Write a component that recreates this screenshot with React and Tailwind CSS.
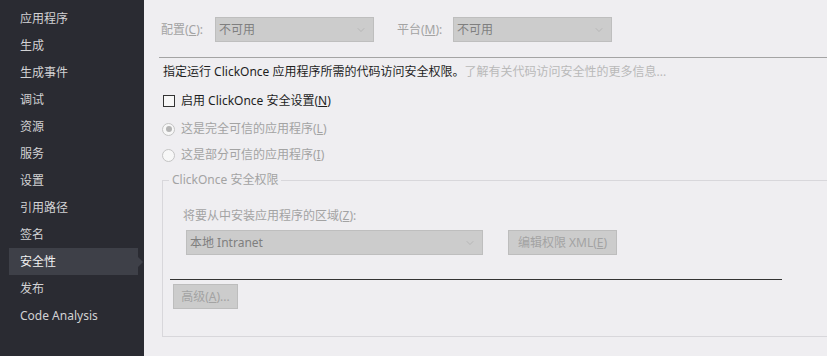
import { ChevronDown } from "lucide-react";

const navItems = [
  "应用程序",
  "生成",
  "生成事件",
  "调试",
  "资源",
  "服务",
  "设置",
  "引用路径",
  "签名",
  "安全性",
  "发布",
  "Code Analysis",
];

const font = { fontFamily: '"Noto Sans", "Noto Sans CJK SC", sans-serif' };

function Select({ value, width }) {
  return (
    <div
      className="flex items-center justify-between h-[25px] bg-[#cccccc] border border-[#bebebe] pl-[3px] pr-[6px]"
      style={{ width }}
    >
      <span className="text-[12px] text-[#7f7f7f]">{value}</span>
      <ChevronDown size={12} strokeWidth={1.2} className="text-[#a8a8a8]" />
    </div>
  );
}

function Button({ children, className = "" }) {
  return (
    <div
      className={`flex items-center justify-center h-[25px] bg-[#cccccc] border border-[#bdbdbd] text-[12px] text-[#a3a3a3] ${className}`}
    >
      {children}
    </div>
  );
}

export default function App() {
  return (
    <div className="flex w-[827px] h-[356px] overflow-hidden" style={font}>
      {/* Sidebar */}
      <div className="w-[144px] h-full bg-[#2a2b32] pt-[5px] shrink-0">
        {navItems.map((item) => {
          const active = item === "安全性";
          return (
            <div key={item} className="relative h-[27px] flex items-center">
              <div
                className={`ml-[9px] w-[129px] h-full flex items-center pl-[11px] text-[12px] ${
                  active ? "bg-[#3e4048] text-[#f2f2f2]" : "text-[#d2d2d4]"
                }`}
              >
                {item}
              </div>
              {active && (
                <div className="absolute left-[138px] top-[9px] w-0 h-0 border-y-[5px] border-y-transparent border-l-[5px] border-l-[#3e4048]" />
              )}
            </div>
          );
        })}
      </div>

      {/* Main */}
      <div className="flex-1 h-full bg-[#efeef1] text-[12px]">
        <div className="flex items-center pt-[17px] pl-[17px]">
          <span className="w-[54px] text-[#a3a3a3]">
            配置(<span className="underline">C</span>):
          </span>
          <Select value="不可用" width={159} />
          <span className="ml-[23px] w-[56px] text-[#a3a3a3]">
            平台(<span className="underline">M</span>):
          </span>
          <Select value="不可用" width={159} />
        </div>

        <div className="ml-[15px] mt-[15px] h-px bg-[#a4a4a4]" />

        <div className="mt-[6px] pl-[19px] h-[16px] leading-[16px] text-[#1e1e1e]">
          指定运行 ClickOnce 应用程序所需的代码访问安全权限。
          <span className="text-[#b9b9b9]">了解有关代码访问安全性的更多信息...</span>
        </div>

        <div className="mt-[13px] pl-[19px] flex items-center h-[16px] text-[#1e1e1e]">
          <div className="w-[12px] h-[12px] border border-[#333333] bg-[#f7f7f7]" />
          <span className="ml-[6px]">
            启用 ClickOnce 安全设置(<span className="underline">N</span>)
          </span>
        </div>

        <div className="mt-[12px] pl-[18px] flex items-center h-[16px] text-[#a3a3a3]">
          <div className="w-[13px] h-[13px] rounded-full border border-[#c4c4c4] bg-[#f7f7f7] flex items-center justify-center">
            <div className="w-[6px] h-[6px] rounded-full bg-[#b4b4b4]" />
          </div>
          <span className="ml-[6px]">
            这是完全可信的应用程序(<span className="underline">L</span>)
          </span>
        </div>

        <div className="mt-[10px] pl-[18px] flex items-center h-[16px] text-[#a3a3a3]">
          <div className="w-[13px] h-[13px] rounded-full border border-[#c4c4c4] bg-[#f7f7f7]" />
          <span className="ml-[6px]">
            这是部分可信的应用程序(<span className="underline">I</span>)
          </span>
        </div>

        {/* Group box */}
        <div className="relative ml-[18px] mt-[17px] h-[157px] border border-r-0 border-[#d8d7db]">
          <span className="absolute -top-[9px] left-[6px] px-[3px] bg-[#efeef1] text-[#a3a3a3] leading-[16px]">
            ClickOnce 安全权限
          </span>
          <div className="pt-[27px] pl-[20px] leading-[16px] text-[#a3a3a3]">
            将要从中安装应用程序的区域(<span className="underline">Z</span>):
          </div>
          <div className="flex mt-[6px] ml-[23px]">
            <Select value="本地 Intranet" width={297} />
            <Button className="ml-[25px] w-[109px]">
              编辑权限 XML(<span className="underline">E</span>)
            </Button>
          </div>
          <div className="ml-[7px] mt-[24px] w-[612px] h-px bg-[#333333]" />
          <Button className="ml-[10px] mt-[4px] w-[65px]">
            高级(<span className="underline">A</span>)...
          </Button>
        </div>
      </div>
    </div>
  );
}
